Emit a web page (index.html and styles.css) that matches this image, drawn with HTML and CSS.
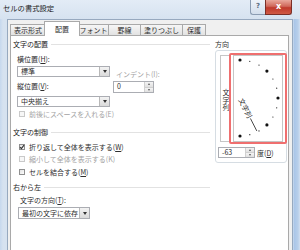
FILE: index.html
```html
<!DOCTYPE html>
<html lang="ja">
<head>
  <meta charset="UTF-8" />
  <title>セルの書式設定</title>
  <meta name="viewport" content="width=device-width, initial-scale=1" />
  <link rel="stylesheet" href="styles.css">
</head>
<body>
  <div class="window">
    <div class="titlebar">
      <span class="title">セルの書式設定</span>
      <div class="caption-btns">
        <span class="btn-help">?</span>
        <span class="btn-close">x</span>
      </div>
    </div>

    <div class="client">
      <div class="tabs">
        <span class="tab">表示形式</span>
        <span class="tab active">配置</span>
        <span class="tab">フォント</span>
        <span class="tab">罫線</span>
        <span class="tab">塗りつぶし</span>
        <span class="tab">保護</span>
      </div>

      <div class="panel">
        <div class="left">
          <div class="group-title">文字の配置</div>
          <div class="align-row">
            <div class="col-main">
              <div class="label">横位置(<u>H</u>):</div>
              <div class="select"><span>標準</span><i class="drop"></i></div>
              <div class="label gap">縦位置(<u>V</u>):</div>
              <div class="select second"><span>中央揃え</span><i class="drop"></i></div>
            </div>
            <div class="col-indent">
              <div class="label dim">インデント(I):</div>
              <div class="spin"><span>0</span><i class="spin-btns"><b class="up"></b><b class="down"></b></i></div>
            </div>
          </div>
          <div class="check disabled first"><i class="box"></i><span>前後にスペースを入れる(E)</span></div>

          <div class="group-title spaced">文字の制御</div>
          <div class="checks">
            <div class="check">
              <i class="box">
                <svg viewBox="0 0 6 6" width="6" height="6"><path d="M1 3.2 L2.4 4.6 L5 1.2" fill="none" stroke="#333" stroke-width="1.1"/></svg>
              </i>
              <span>折り返して全体を表示する(<u>W</u>)</span>
            </div>
            <div class="check disabled"><i class="box"></i><span>縮小して全体を表示する(K)</span></div>
            <div class="check"><i class="box"></i><span>セルを結合する(<u>M</u>)</span></div>
          </div>

          <div class="group-title rtl">右から左</div>
          <div class="label direction">文字の方向(<u>T</u>):</div>
          <div class="select dir"><span>最初の文字に依存</span><i class="drop"></i></div>
        </div>

        <div class="right">
          <div class="group-label">方向</div>
          <div class="orient-box">
            <div class="orient-inner">
              <div class="vert-text"><span>文字列</span></div>
              <div class="dial">
                <svg viewBox="0 0 48 85" width="48" height="85">
                  <g fill="#111">
                    <circle cx="6" cy="4" r="1.6"/>
                    <circle cx="15.8" cy="5.3" r="0.6"/>
                    <circle cx="25" cy="9.1" r="0.6"/>
                    <circle cx="32.9" cy="15.1" r="1.6"/>
                    <circle cx="38.9" cy="23" r="0.6"/>
                    <circle cx="42.7" cy="32.2" r="0.6"/>
                    <circle cx="44" cy="42" r="1.6"/>
                    <circle cx="42.7" cy="51.8" r="0.6"/>
                    <circle cx="38.9" cy="61" r="0.6"/>
                    <circle cx="32.9" cy="68.9" r="1.6"/>
                    <circle cx="25" cy="74.9" r="0.6"/>
                    <circle cx="15.8" cy="78.7" r="0.6"/>
                    <circle cx="6" cy="80" r="1.6"/>
                  </g>
                  <g transform="translate(6 42) rotate(63)">
                    <text x="1" y="2.5" font-size="7" fill="#222" font-family="Noto Sans CJK JP, sans-serif">文字列</text>
                    <line x1="23" y1="0" x2="37" y2="0" stroke="#333" stroke-width="0.8"/>
                  </g>
                </svg>
              </div>
            </div>
            <div class="degree-row">
              <div class="spin small"><span>-63</span><i class="spin-btns"><b class="up"></b><b class="down"></b></i></div>
              <span>度(<u>D</u>)</span>
            </div>
          </div>
        </div>
      </div>
    </div>
  </div>
</body>
</html>
```

FILE: styles.css
```css
body {
  margin: 0;
  width: 300px;
  height: 250px;
  overflow: hidden;
  font-family: "Noto Sans CJK JP", sans-serif;
  font-size: 7px;
  color: #2e2e2e;
}
u {
  text-decoration-thickness: 0.5px;
}
.window {
  width: 300px;
  height: 250px;
  display: flex;
  flex-direction: column;
  background: linear-gradient(90deg, #c6d8ee 0, #d6e2f0 3px, #d6e2f0 293px, #a9c5e8 294px, #b8cfea 298px, #d2dff0 300px);
}
.titlebar {
  height: 19px;
  display: flex;
  justify-content: space-between;
  align-items: flex-start;
  background: linear-gradient(#e3ecf6, #d6e2f0);
}
.title {
  padding: 3px 0 0 3px;
  font-size: 7.3px;
  line-height: 10px;
  color: #1c1c1c;
}
.caption-btns {
  display: flex;
  margin-right: 8px;
}
.btn-help, .btn-close {
  height: 15px;
  box-sizing: border-box;
  border: 1px solid #8c9db3;
  border-top: none;
  text-align: center;
  line-height: 13px;
}
.btn-help {
  width: 15px;
  border-radius: 0 0 0 3px;
  border-right: none;
  background: linear-gradient(#eef3f9, #d3deec);
  color: #5b6b80;
  font-family: "DejaVu Sans", sans-serif;
  font-size: 7px;
  font-weight: bold;
}
.btn-close {
  width: 27px;
  border-color: #7b2f27;
  border-radius: 0 0 3px 0;
  background: linear-gradient(#e9a89c, #d0685a 45%, #c0392b 55%, #cf5a45);
  color: #fff;
  font-family: "DejaVu Sans", sans-serif;
  font-size: 8px;
  font-weight: bold;
}

.client {
  flex: 1;
  margin: 0 7px;
  padding: 1px 3px 0 2px;
  display: flex;
  flex-direction: column;
  background: #f0f0f0;
  border: 1px solid #97a9bf;
  border-bottom: none;
}
.tabs {
  display: flex;
  align-items: flex-end;
  position: relative;
  z-index: 1;
}
.tab {
  box-sizing: border-box;
  height: 11px;
  line-height: 10px;
  text-align: center;
  border: 1px solid #a9a9a9;
  border-bottom: none;
  background: linear-gradient(#f6f6f6, #e2e2e2);
  margin-left: -1px;
}
.tab:nth-child(1) { width: 36px; margin-left: 0; }
.tab:nth-child(3) { width: 31px; margin-left: -2px; }
.tab:nth-child(4) { width: 33px; }
.tab:nth-child(5) { width: 43px; }
.tab:nth-child(6) { width: 24px; }
.tab.active {
  width: 36px;
  height: 15px;
  line-height: 14px;
  margin: 0 0 -1px -2px;
  background: #fff;
  position: relative;
  z-index: 2;
}

.panel {
  flex: 1;
  display: flex;
  gap: 5px;
  padding: 3px 0 0 2px;
  background: #fff;
  border: 1px solid #a9a9a9;
  border-bottom: none;
}
.left {
  width: 197px;
  display: flex;
  flex-direction: column;
}
.group-title {
  display: flex;
  align-items: center;
  gap: 3px;
  height: 10px;
  line-height: 10px;
  color: #1a1a1a;
}
.group-title::after {
  content: "";
  flex: 1;
  border-top: 1px solid #e2e2e2;
  margin-top: 1px;
}
.group-title.spaced { margin-top: 6px; }
.group-title.rtl { margin-top: 4px; }
.label {
  height: 11px;
  line-height: 11px;
}
.label.dim, .check.disabled { color: #a3a3a3; }

.align-row {
  display: flex;
  margin-top: 5px;
  padding-left: 4px;
}
.col-main {
  width: 93px;
  display: flex;
  flex-direction: column;
}
.col-main .label.gap { margin-top: 4px; }
.col-indent {
  margin-left: 3px;
  padding-top: 15px;
}
.col-indent .label { padding-left: 3px; }

.select, .spin {
  box-sizing: border-box;
  display: flex;
  height: 11px;
  border: 1px solid #abadb3;
  background: #fff;
  margin-top: 1px;
}
.select.second { margin-top: 4px; }
.select span, .spin span {
  flex: 1;
  padding-left: 3px;
  line-height: 9px;
}
.drop {
  width: 9px;
  margin: 0;
  display: flex;
  align-items: center;
  justify-content: center;
  border-left: 1px solid #b8b8b8;
  background: linear-gradient(#f3f3f3, #dadada);
}
.drop::before {
  content: "";
  border: 2px solid transparent;
  border-top: 3px solid #333;
  border-bottom: none;
}
.spin {
  width: 41px;
  height: 12px;
}
.spin-btns {
  width: 8px;
  display: flex;
  flex-direction: column;
  border-left: 1px solid #d0d0d0;
}
.spin-btns b {
  flex: 1;
  display: flex;
  align-items: center;
  justify-content: center;
  background: linear-gradient(#f4f4f4, #e0e0e0);
}
.spin-btns b + b { border-top: 1px solid #d0d0d0; }
.spin-btns b::before {
  content: "";
  border: 1.5px solid transparent;
}
.spin-btns .up::before { border-bottom: 2px solid #555; border-top: none; }
.spin-btns .down::before { border-top: 2px solid #555; border-bottom: none; }

.check {
  display: flex;
  align-items: center;
  gap: 4px;
  height: 12.5px;
  padding-left: 6px;
}
.check.first { margin-top: 1px; }
.checks { margin-top: 4px; }
.box {
  box-sizing: border-box;
  width: 6px;
  height: 6px;
  border: 1px solid #8f8f8f;
  background: linear-gradient(135deg, #e2e2e2, #fdfdfd);
  display: flex;
}
.box svg {
  margin: -1px;
}
.check.disabled .box {
  border-color: #c9c9c9;
  background: #f7f7f7;
}

.label.direction {
  margin-top: 3px;
  padding-left: 7px;
}
.select.dir {
  width: 72px;
  height: 12px;
  margin-left: 5px;
}
.select.dir span { line-height: 10px; }

.right {
  width: 72px;
  display: flex;
  flex-direction: column;
}
.group-label {
  height: 10px;
  line-height: 10px;
}
.orient-box {
  box-sizing: border-box;
  height: 113px;
  margin-top: 1px;
  padding: 4px 0 0 4px;
  border: 1px solid #d6dde3;
  border-radius: 3px;
}
.orient-inner {
  display: flex;
  gap: 2px;
}
.vert-text {
  box-sizing: border-box;
  width: 11px;
  height: 87px;
  border: 1px solid #c6c6c6;
  display: flex;
  justify-content: center;
  padding-top: 33px;
}
.vert-text span {
  writing-mode: vertical-rl;
  line-height: 9px;
  letter-spacing: 0.5px;
}
.dial {
  position: relative;
  box-sizing: border-box;
  width: 50px;
  height: 87px;
  border: 1px solid #c6c6c6;
  display: flex;
}
.dial::after {
  content: "";
  position: absolute;
  top: -3px;
  left: -5px;
  right: -5px;
  bottom: -3px;
  border: 2px solid #ef6f6f;
  border-radius: 2px;
}
.degree-row {
  display: flex;
  align-items: center;
  gap: 2px;
  margin-top: 5px;
  margin-left: -2px;
}
.spin.small {
  width: 37px;
  height: 11px;
  margin-top: 0;
}
```
